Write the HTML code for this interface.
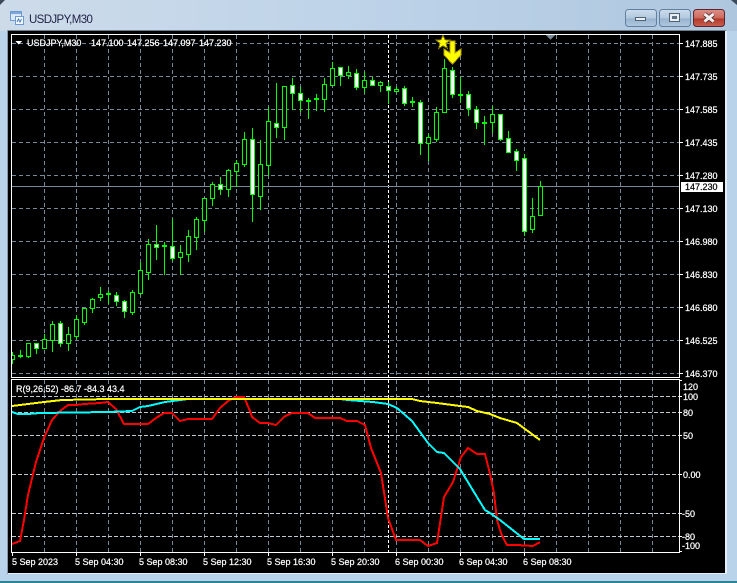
<!DOCTYPE html>
<html><head><meta charset="utf-8"><title>USDJPY,M30</title>
<style>
html,body{margin:0;padding:0;width:737px;height:583px;overflow:hidden;background:#b9d3ea}
svg{position:absolute;left:0;top:0;display:block}
text{font-family:"Liberation Sans",sans-serif;font-size:9px;fill:#fff;stroke:#fff;stroke-width:.22px}
</style></head><body>
<svg width="737" height="583" viewBox="0 0 737 583" xmlns="http://www.w3.org/2000/svg">
<defs>
<linearGradient id="bg" x1="0" y1="0" x2="1" y2="0"><stop offset="0" stop-color="#cddbe9"/><stop offset="0.45" stop-color="#bfd4e9"/><stop offset="1" stop-color="#aec7df"/></linearGradient>
<linearGradient id="btn" x1="0" y1="0" x2="0" y2="1"><stop offset="0" stop-color="#ccdcec"/><stop offset="0.5" stop-color="#b3c8de"/><stop offset="0.55" stop-color="#99b3ce"/><stop offset="1" stop-color="#b0c9e1"/></linearGradient>
<linearGradient id="cls" x1="0" y1="0" x2="0" y2="1"><stop offset="0" stop-color="#dc9088"/><stop offset="0.5" stop-color="#cb6a5c"/><stop offset="0.55" stop-color="#b23a2c"/><stop offset="1" stop-color="#c8604e"/></linearGradient>
</defs>
<rect width="737" height="583" fill="#b9d3ea"/>
<rect width="737" height="31" fill="url(#bg)"/>
<path d="M0 0H5L0 5Z" fill="#3a4a5a"/><path d="M737 0H731L737 5Z" fill="#3a4a5a"/>
<rect x="0" y="581" width="737" height="2" fill="#2d8296"/>
<rect x="7" y="30" width="719" height="1" fill="#6f7d8a"/>
<rect x="7" y="30" width="1" height="544" fill="#8a98a6"/>
<rect x="725" y="31" width="2" height="543" fill="#e6eff7"/>
<rect x="8" y="573" width="719" height="1" fill="#e6eff7"/>
<rect x="8" y="31" width="717" height="542" fill="#000"/>

<!-- window icon -->
<g shape-rendering="crispEdges">
<rect x="10.500" y="11.500" width="11" height="9" fill="#dbe8f6" stroke="#6d9bd0"/>
<rect x="11" y="12" width="10" height="2" fill="#7aa7dc"/>
<rect x="15.500" y="16.500" width="8" height="8" fill="#f2f7fc" stroke="#6d9bd0"/>
</g>
<path d="M17 22L18.500 19L20 22L21.500 19" fill="none" stroke="#4f81c4"/>
<text x="29" y="23" style="font-size:11.500px;letter-spacing:-.62px;fill:#1f1f45;stroke:none">USDJPY,M30</text>

<!-- window buttons -->
<rect x="625.500" y="9.500" width="31" height="17" rx="3" fill="url(#btn)" stroke="#62809e"/>
<rect x="635.500" y="17.500" width="10" height="3" fill="#e9eef3" stroke="#4f6377"/>
<rect x="659.500" y="9.500" width="31" height="17" rx="3" fill="url(#btn)" stroke="#62809e"/>
<rect x="669.500" y="13.500" width="10" height="8" fill="#e9eef3" stroke="#4f6377"/>
<rect x="672" y="16" width="5" height="3" fill="#5d7084"/>
<rect x="693.500" y="9.500" width="31" height="17" rx="3" fill="url(#cls)" stroke="#5e2430"/>
<path d="M704.500 14L713.500 21.500M713.500 14L704.500 21.500" stroke="#4d2a2a" stroke-width="4.500" fill="none"/>
<path d="M704.500 14L713.500 21.500M713.500 14L704.500 21.500" stroke="#f4efee" stroke-width="3" fill="none"/>

<g shape-rendering="crispEdges">
<!-- grid -->
<path d="M44.500 35V377M76.500 35V377M108.500 35V377M140.500 35V377M172.500 35V377M204.500 35V377M236.500 35V377M268.500 35V377M300.500 35V377M332.500 35V377M364.500 35V377M396.500 35V377M428.500 35V377M460.500 35V377M492.500 35V377M524.500 35V377M556.500 35V377M588.500 35V377M620.500 35V377M652.500 35V377" fill="none" stroke="#778899" stroke-dasharray="4 3"/>
<path d="M44.500 380V552M76.500 380V552M108.500 380V552M140.500 380V552M172.500 380V552M204.500 380V552M236.500 380V552M268.500 380V552M300.500 380V552M332.500 380V552M364.500 380V552M396.500 380V552M428.500 380V552M460.500 380V552M492.500 380V552M524.500 380V552M556.500 380V552M588.500 380V552M620.500 380V552M652.500 380V552" fill="none" stroke="#778899" stroke-dasharray="4 3"/>
<path d="M12 43.500H679M12 76.500H679M12 109.500H679M12 142.500H679M12 175.500H679M12 208.500H679M12 241.500H679M12 274.500H679M12 307.500H679M12 340.500H679M12 373.500H679" fill="none" stroke="#778899" stroke-dasharray="4 3"/>
<path d="M388.500 35V377M388.500 380V552" fill="none" stroke="#fff" stroke-dasharray="3 2"/>
<path d="M12 396.500H679M12 412.500H679M12 435.500H679M12 474.500H679M12 513.500H679M12 536.500H679" fill="none" stroke="#c0c8d0" stroke-dasharray="4 2"/>
<path d="M12 186.500H680" fill="none" stroke="#778899"/>

<!-- wicks -->
<path fill="none" stroke="#00ff00" d="M12.500 352V364M20.500 350V358M28.500 343V358M36.500 343V354M44.500 334V349M52.500 321V352M60.500 321V347M68.500 327V351M76.500 315V339M84.500 308V325M92.500 298V313M100.500 287V301M108.500 291V304M116.500 292V306M124.500 300V318M132.500 290V315M140.500 262V295M148.500 239V280M156.500 225V260M164.500 242V275M172.500 219V261M180.500 245V275M188.500 230V262M196.500 217V250M204.500 198V232M212.500 182V206M220.500 177V195M228.500 169V197M236.500 160V187M244.500 132V167M252.500 128V222M260.500 140V210M268.500 107V176M276.500 83V138M284.500 86V140M292.500 78V110M300.500 87V112M308.500 98V119M316.500 94V111M324.500 78V112M332.500 62V86M340.500 67V86M348.500 66V79M356.500 69V90M364.500 72V93M372.500 77V86M380.500 81V92M388.500 82V104M396.500 87V93M404.500 86V106M412.500 97V107M420.500 100V155M428.500 134V161M436.500 107V142M444.500 59V113M452.500 67V98M460.500 77V103M468.500 91V116M476.500 106V129M484.500 116V145M492.500 106V133M500.500 114V141M508.500 131V153M516.500 149V171M524.500 154V236M532.500 198V233M540.500 181V216"/>
<!-- hollow bodies -->
<g fill="#000" stroke="#00ff00">
<rect x="10.500" y="355.500" width="4" height="4"/>
<rect x="26.500" y="343.500" width="4" height="13"/>
<rect x="42.500" y="339.500" width="4" height="9"/>
<rect x="50.500" y="324.500" width="4" height="16"/>
<rect x="66.500" y="334.500" width="4" height="9"/>
<rect x="74.500" y="319.500" width="4" height="17"/>
<rect x="82.500" y="308.500" width="4" height="14"/>
<rect x="90.500" y="299.500" width="4" height="9"/>
<rect x="98.500" y="294.500" width="4" height="3"/>
<rect x="130.500" y="292.500" width="4" height="20"/>
<rect x="138.500" y="270.500" width="4" height="23"/>
<rect x="146.500" y="244.500" width="4" height="28"/>
<rect x="178.500" y="252.500" width="4" height="5"/>
<rect x="186.500" y="236.500" width="4" height="18"/>
<rect x="194.500" y="219.500" width="4" height="18"/>
<rect x="202.500" y="198.500" width="4" height="22"/>
<rect x="210.500" y="184.500" width="4" height="14"/>
<rect x="226.500" y="170.500" width="4" height="19"/>
<rect x="234.500" y="163.500" width="4" height="8"/>
<rect x="242.500" y="139.500" width="4" height="25"/>
<rect x="258.500" y="164.500" width="4" height="32"/>
<rect x="266.500" y="121.500" width="4" height="44"/>
<rect x="282.500" y="86.500" width="4" height="41"/>
<rect x="322.500" y="84.500" width="4" height="15"/>
<rect x="330.500" y="68.500" width="4" height="17"/>
<rect x="346.500" y="72.500" width="4" height="3"/>
<rect x="362.500" y="80.500" width="4" height="7"/>
<rect x="378.500" y="82.500" width="4" height="3"/>
<rect x="394.500" y="89.500" width="4" height="2"/>
<rect x="426.500" y="137.500" width="4" height="6"/>
<rect x="434.500" y="112.500" width="4" height="27"/>
<rect x="442.500" y="68.500" width="4" height="44"/>
<rect x="490.500" y="114.500" width="4" height="8"/>
<rect x="530.500" y="216.500" width="4" height="13"/>
<rect x="538.500" y="186.500" width="4" height="29"/>
</g>
<!-- filled bodies -->
<g fill="#fff" stroke="#00ff00">
<rect x="34.500" y="343.500" width="4" height="5"/>
<rect x="58.500" y="323.500" width="4" height="20"/>
<rect x="114.500" y="295.500" width="4" height="6"/>
<rect x="122.500" y="301.500" width="4" height="10"/>
<rect x="154.500" y="244.500" width="4" height="3"/>
<rect x="170.500" y="246.500" width="4" height="12"/>
<rect x="218.500" y="184.500" width="4" height="5"/>
<rect x="250.500" y="139.500" width="4" height="55"/>
<rect x="274.500" y="123.500" width="4" height="4"/>
<rect x="290.500" y="85.500" width="4" height="8"/>
<rect x="298.500" y="93.500" width="4" height="7"/>
<rect x="338.500" y="67.500" width="4" height="8"/>
<rect x="354.500" y="73.500" width="4" height="14"/>
<rect x="370.500" y="80.500" width="4" height="5"/>
<rect x="386.500" y="86.500" width="4" height="4"/>
<rect x="402.500" y="88.500" width="4" height="15"/>
<rect x="418.500" y="102.500" width="4" height="41"/>
<rect x="450.500" y="70.500" width="4" height="24"/>
<rect x="466.500" y="94.500" width="4" height="14"/>
<rect x="474.500" y="109.500" width="4" height="13"/>
<rect x="498.500" y="114.500" width="4" height="25"/>
<rect x="506.500" y="138.500" width="4" height="14"/>
<rect x="514.500" y="151.500" width="4" height="9"/>
<rect x="522.500" y="158.500" width="4" height="73"/>
</g>
<!-- dojis -->
<path fill="#00ff00" d="M18 355h5v2h-5zM106 293h5v2h-5zM162 245h5v2h-5zM306 100h5v2h-5zM314 98h5v2h-5zM410 101h5v2h-5zM458 94h5v2h-5zM482 122h5v2h-5z"/>

<!-- indicators -->
<g fill="none" stroke-width="2">
<path stroke="#ff0000" d="M12 544L20 541L24 520L28 495L36 462L44 438L52 420L60 411L68 405L76 405L84 404L100 403L108 402L116 409L124 424L148 424L156 418L164 413L172 413L180 421L188 419L212 419L220 408L228 401L236 397L244 397L250 411L252 417L260 423L268 423L276 425L284 417L292 413L308 413L315 418L340 418L347 421L357 421L365 425L371 448L381 473L388 518L396 540L420 540L428 546L437 543L444 497L453 482L461 457L468 448L477 454L485 454L490 474L494 493L497 520L501 533L507 545L517 545L533 546L540 542"/>
<path stroke="#00ffff" d="M12 412L18 414L28 414L40 413L108 412L132 411L140 407L148 406L165 402L188 399L340 399L348 400L373 402L388 404L397 408L412 421L428 443L437 452L444 453L460 469L477 497L485 510L490 513L500 520L524 539L540 539"/>
<path stroke="#ffff00" d="M12 406L28 404L44 402L62 400L108 399L397 399L412 399L420 401L437 403L460 406L468 407L477 411L490 414L500 418L517 423L525 429L540 440"/>
</g>

<!-- arrow & star -->
<path d="M450 41H455V53L461 49V55L452.500 64L444 55V49L450 53Z" fill="#ffff00" stroke="#b8a000" stroke-width="1"/>
<path d="M443 35L444.900 39.700L450 40.100L446.100 43.400L447.300 48.400L443 45.700L438.700 48.400L439.900 43.400L436 40.100L441.100 39.700Z" fill="#ffff00" stroke="#8a7a00" stroke-width="1"/>

<path d="M546 35H555L550.500 40Z" fill="#778899"/>

<!-- frames -->
<path d="M11.500 34.500H679.500V377.500H11.500Z" fill="none" stroke="#fff"/>
<path d="M11.500 379.500H679.500V552.500H11.500Z" fill="none" stroke="#fff"/>
<rect x="8" y="35" width="3" height="344" fill="#000"/>
<!-- ticks -->
<path stroke="#fff" fill="none" d="M680 43.500h3M680 76.500h3M680 109.500h3M680 142.500h3M680 175.500h3M680 208.500h3M680 241.500h3M680 274.500h3M680 307.500h3M680 340.500h3M680 373.500h3M680 380.500h2M680 396.500h2M680 412.500h2M680 435.500h2M680 474.500h2M680 513.500h2M680 536.500h2M680 551.500h2M12.500 553v3M76.500 553v3M140.500 553v3M204.500 553v3M268.500 553v3M332.500 553v3M396.500 553v3M460.500 553v3M524.500 553v3"/>
<rect x="681" y="182" width="42" height="10" fill="#fff"/>
<path d="M15 41H22L18.500 44.500Z" fill="#fff"/>
</g>

<!-- legend -->
<text x="27" y="46">USDJPY,M30</text>
<text x="91" y="46">147.100</text>
<text x="127" y="46">147.256</text>
<text x="163" y="46">147.097</text>
<text x="199" y="46">147.230</text>
<text x="16" y="392">R(9,26,52) -86.7 -84.3 43.4</text>

<!-- price axis -->
<text x="685" y="47">147.885</text>
<text x="685" y="80">147.735</text>
<text x="685" y="113">147.585</text>
<text x="685" y="146">147.435</text>
<text x="685" y="179">147.280</text>
<text x="685" y="190" style="fill:#000;stroke:#000">147.230</text>
<text x="685" y="212">147.130</text>
<text x="685" y="245">146.980</text>
<text x="685" y="278">146.830</text>
<text x="685" y="311">146.680</text>
<text x="685" y="344">146.525</text>
<text x="685" y="377">146.370</text>

<!-- indicator axis -->
<text x="683" y="390">120</text>
<text x="683" y="400">100</text>
<text x="683" y="416">80</text>
<text x="683" y="439">50</text>
<text x="683" y="478">0.00</text>
<text x="682" y="517">-50</text>
<text x="682" y="540">-80</text>
<text x="682" y="549">-100</text>

<!-- time axis -->
<text x="12" y="565">5 Sep 2023</text>
<text x="75" y="565">5 Sep 04:30</text>
<text x="139" y="565">5 Sep 08:30</text>
<text x="203" y="565">5 Sep 12:30</text>
<text x="267" y="565">5 Sep 16:30</text>
<text x="331" y="565">5 Sep 20:30</text>
<text x="395" y="565">6 Sep 00:30</text>
<text x="459" y="565">6 Sep 04:30</text>
<text x="523" y="565">6 Sep 08:30</text>
</svg>
</body></html>
